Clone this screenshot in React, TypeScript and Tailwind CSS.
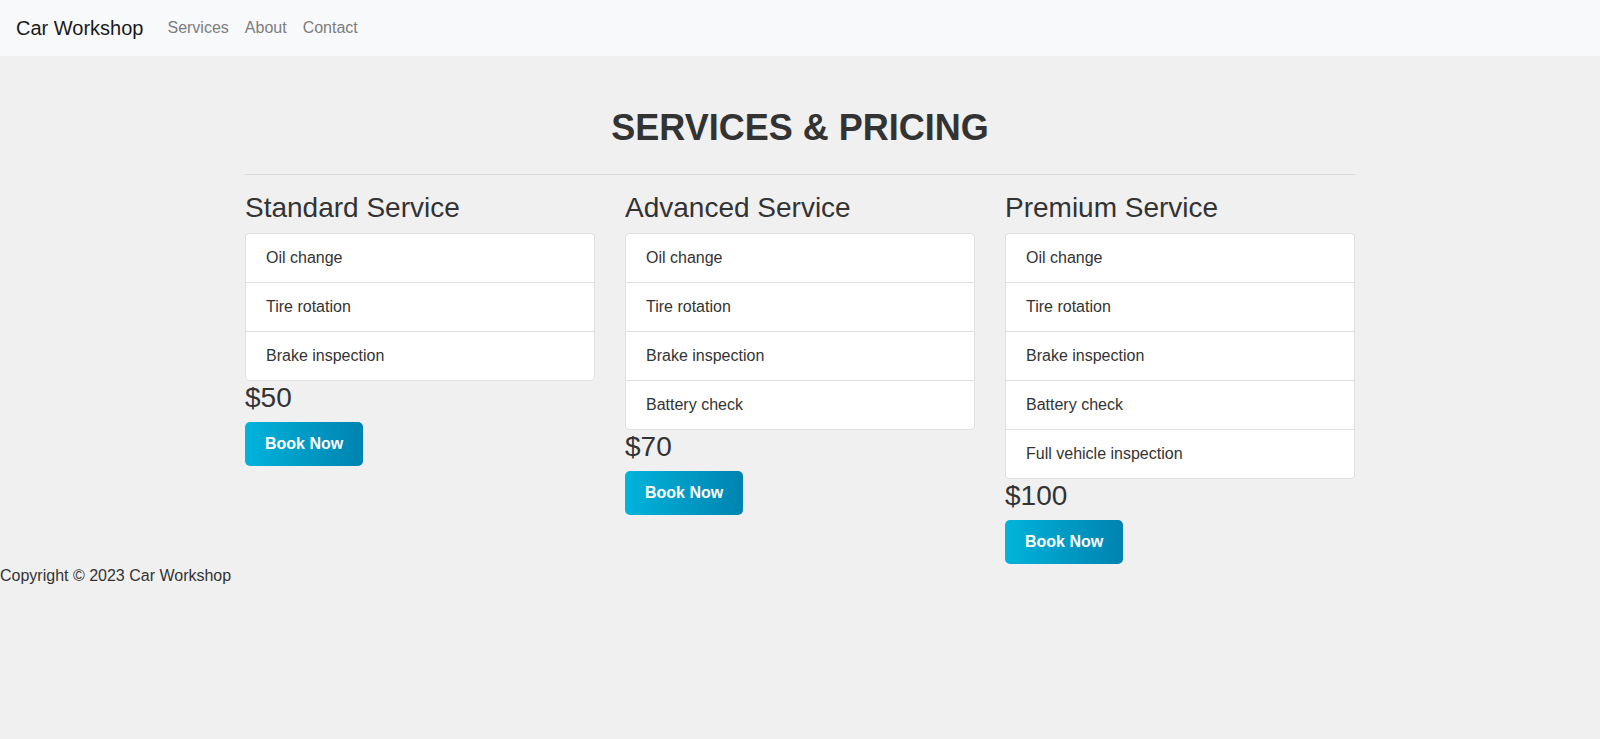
const plans = [
  {
    name: "Standard Service",
    items: ["Oil change", "Tire rotation", "Brake inspection"],
    price: "$50",
  },
  {
    name: "Advanced Service",
    items: ["Oil change", "Tire rotation", "Brake inspection", "Battery check"],
    price: "$70",
  },
  {
    name: "Premium Service",
    items: [
      "Oil change",
      "Tire rotation",
      "Brake inspection",
      "Battery check",
      "Full vehicle inspection",
    ],
    price: "$100",
  },
];

function PlanColumn({ plan }: { plan: (typeof plans)[number] }) {
  return (
    <div>
      <h3 className="text-[28px] leading-[1.2] mb-2 text-[#333]">{plan.name}</h3>
      <ul className="bg-white border border-[#dfdfdf] rounded-[4px]">
        {plan.items.map((item, i) => (
          <li
            key={item}
            className={
              i === 0
                ? "px-5 py-3 leading-6 text-[#333]"
                : "px-5 py-3 leading-6 text-[#333] border-t border-[#dfdfdf]"
            }
          >
            {item}
          </li>
        ))}
      </ul>
      <p className="text-[28px] leading-[1.2] mb-2 text-[#333]">{plan.price}</p>
      <button className="px-5 py-[10px] leading-6 font-bold text-white rounded-[5px] bg-gradient-to-r from-[#00b4db] to-[#0083b0]">
        Book Now
      </button>
    </div>
  );
}

export default function App() {
  return (
    <div className="min-h-[739px] bg-[#f0f0f0] text-[16px] text-[#333] font-['Liberation_Sans',Arial,sans-serif]">
      <nav className="h-14 bg-[#f8f9fa] flex items-center px-4">
        <span className="text-[20px] leading-[30px] text-[#1a1a1a] mr-4">Car Workshop</span>
        <div className="flex text-[#7c7d7e] leading-6">
          <a className="px-2">Services</a>
          <a className="px-2">About</a>
          <a className="px-2">Contact</a>
        </div>
      </nav>

      <main className="w-[1140px] mx-auto px-[15px] pt-[50px]">
        <h1 className="text-[36px] leading-[1.2] font-bold text-center text-[#333] mb-2">
          SERVICES &amp; PRICING
        </h1>
        <hr className="mt-[25px] mb-4 border-t border-[#dadada]" />
        <div className="grid grid-cols-3 gap-[30px] items-start">
          {plans.map((plan) => (
            <PlanColumn key={plan.name} plan={plan} />
          ))}
        </div>
      </main>

      <footer className="leading-6 text-[#333]">Copyright © 2023 Car Workshop</footer>
    </div>
  );
}
